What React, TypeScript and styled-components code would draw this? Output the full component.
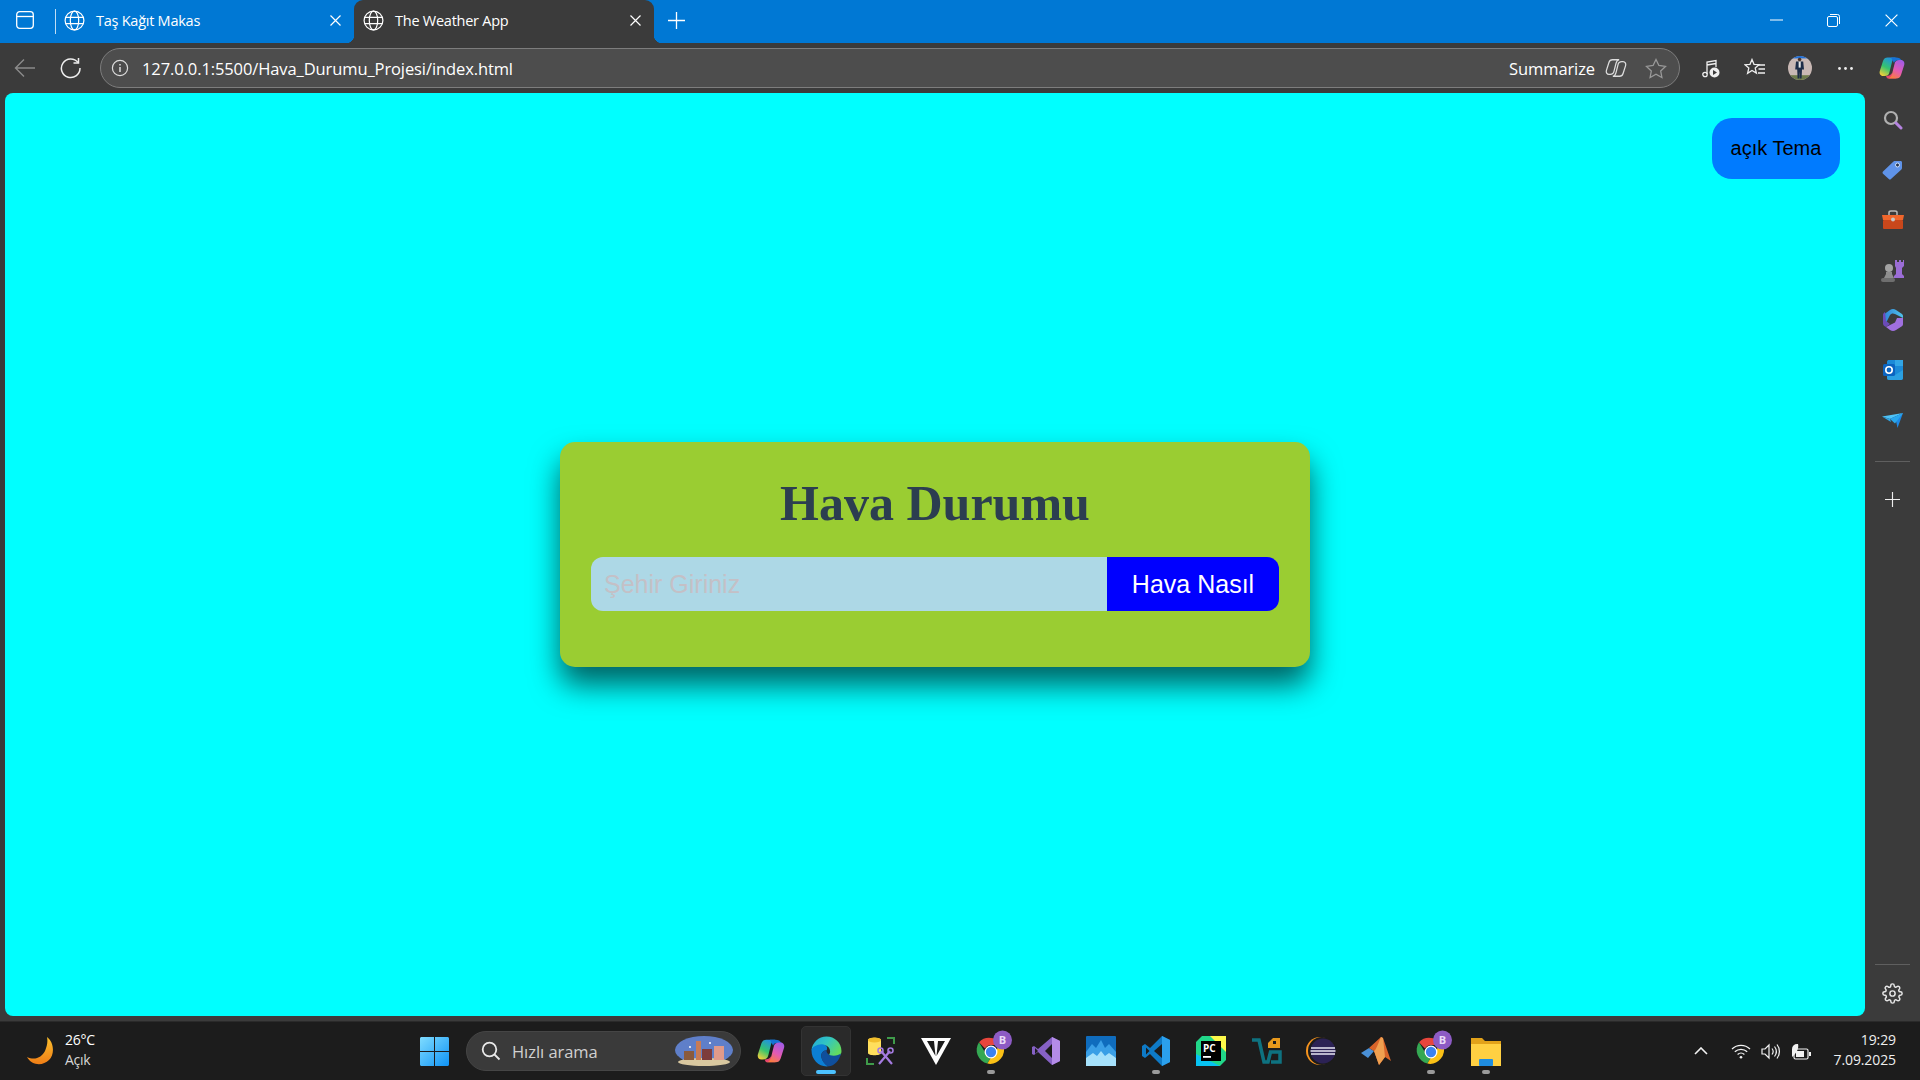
import React from 'react';
import styled, { createGlobalStyle } from 'styled-components';

const GlobalStyle = createGlobalStyle`
  html, body {
    margin: 0;
    padding: 0;
    background: #3b3b3b;
    overflow: hidden;
  }
  * {
    box-sizing: border-box;
  }
`;

const UI_FONT = `"Open Sans", "Noto Sans", "Liberation Sans", sans-serif`;
const PAGE_FONT = `"Liberation Sans", Arial, sans-serif`;

const Screen = styled.div`
  width: 1920px;
  height: 1080px;
  display: flex;
  flex-direction: column;
  font-family: ${UI_FONT};
  color: #fff;
`;

/* ---------- tab strip ---------- */

const TabStrip = styled.div`
  height: 43px;
  flex: none;
  background: #0078d4;
  display: flex;
  align-items: stretch;
`;

const TabToggle = styled.div`
  width: 55px;
  padding: 0 0 3px 16px;
  display: flex;
  align-items: center;
  position: relative;
  &::after {
    content: '';
    position: absolute;
    right: -1px;
    top: 9px;
    bottom: 9px;
    width: 1px;
    background: rgba(255, 255, 255, 0.75);
  }
`;

const Tab = styled.div<{ $active?: boolean; $width: number; $pad: number }>`
  width: ${p => p.$width}px;
  padding: 0 13px 3px ${p => p.$pad}px;
  display: flex;
  align-items: center;
  position: relative;
  background: ${p => (p.$active ? '#3b3b3b' : 'transparent')};
  border-radius: ${p => (p.$active ? '9px 9px 0 0' : '0')};
  ${p =>
    p.$active &&
    `
    &::before, &::after {
      content: '';
      position: absolute;
      bottom: 0;
      width: 8px;
      height: 8px;
    }
    &::before {
      left: -8px;
      background: radial-gradient(circle at 0 0, transparent 8px, #3b3b3b 8.5px);
    }
    &::after {
      right: -8px;
      background: radial-gradient(circle at 100% 0, transparent 8px, #3b3b3b 8.5px);
    }
  `}
`;

const TabTitle = styled.span`
  flex: 1;
  margin-left: 11px;
  font-size: 14.5px;
  letter-spacing: -0.25px;
  white-space: nowrap;
`;

const NewTab = styled.div`
  width: 44px;
  padding-bottom: 3px;
  display: flex;
  align-items: center;
  justify-content: center;
`;

const WindowControls = styled.div`
  margin-left: auto;
  display: flex;
`;

const WindowButton = styled.div`
  width: 57.6px;
  padding-bottom: 3px;
  display: flex;
  align-items: center;
  justify-content: center;
`;

/* ---------- toolbar ---------- */

const Toolbar = styled.div`
  height: 50px;
  flex: none;
  background: #3b3b3b;
  display: flex;
  align-items: center;
  padding-left: 14px;
`;

const NavButton = styled.div<{ $width: number }>`
  width: ${p => p.$width}px;
  display: flex;
  align-items: center;
  justify-content: flex-start;
`;

const AddressBar = styled.div`
  width: 1580px;
  height: 40px;
  background: #4d4d4d;
  border: 1.5px solid #7d7d7d;
  border-radius: 20px;
  display: flex;
  align-items: center;
  padding: 0 12px 0 10px;
`;

const Url = styled.span`
  margin-left: 13px;
  font-size: 16.5px;
  letter-spacing: -0.1px;
  white-space: nowrap;
`;

const SummarizeLabel = styled.span`
  margin-left: auto;
  margin-right: 10px;
  font-size: 16.5px;
  letter-spacing: -0.1px;
`;

const BarIcon = styled.div`
  margin-left: 18px;
  display: flex;
`;

const ToolbarIcons = styled.div`
  flex: 1;
  display: flex;
  align-items: center;
  padding-left: 20px;
`;

const ToolbarIcon = styled.div<{ $width: number }>`
  width: ${p => p.$width}px;
  display: flex;
  justify-content: center;
  align-items: center;
`;

/* ---------- page area ---------- */

const Middle = styled.div`
  flex: 1;
  display: flex;
  align-items: flex-start;
  min-height: 0;
  padding-left: 5px;
`;

const Viewport = styled.main`
  width: 1860px;
  height: 923px;
  background: #00ffff;
  border-radius: 8px;
  position: relative;
  display: flex;
  align-items: center;
  justify-content: center;
  font-family: ${PAGE_FONT};
`;

const ThemeButton = styled.button`
  position: absolute;
  top: 25px;
  right: 25px;
  width: 128px;
  height: 61px;
  border: none;
  border-radius: 20px;
  background: #007bff;
  color: #000;
  font-family: ${PAGE_FONT};
  font-size: 20px;
`;

const WeatherCard = styled.section`
  width: 750px;
  height: 225px;
  padding: 31px 30px 30px;
  background: #9acd32;
  border-radius: 15px;
  box-shadow: 0 18px 30px rgba(0, 0, 0, 0.62);
`;

const Title = styled.h1`
  margin: 0 0 24px;
  height: 60px;
  text-align: center;
  font-family: "Liberation Serif", "Times New Roman", serif;
  font-size: 50px;
  line-height: 60px;
  font-weight: 700;
  color: #2c3e50;
`;

const SearchRow = styled.form`
  display: flex;
  height: 54px;
  margin: 0 1px;
`;

const CityInput = styled.input`
  flex: 1;
  min-width: 0;
  border: none;
  outline: none;
  padding: 0 13px;
  font-family: ${PAGE_FONT};
  font-size: 25px;
  background: #add8e6;
  border-radius: 12px 0 0 12px;
  &::placeholder {
    color: #c4c0c6;
  }
`;

const SearchButton = styled.button`
  width: 172px;
  border: none;
  background: #0000ff;
  color: #fff;
  font-family: ${PAGE_FONT};
  font-size: 25px;
  border-radius: 0 12px 12px 0;
`;

/* ---------- edge sidebar ---------- */

const Sidebar = styled.aside`
  flex: 1;
  align-self: stretch;
  display: flex;
  flex-direction: column;
  align-items: center;
  padding: 2px 0 3px;
`;

const SideIcon = styled.div`
  width: 28px;
  height: 50px;
  flex: none;
  display: flex;
  align-items: center;
  justify-content: center;
`;

const SideDivider = styled.div<{ $above: number; $below: number }>`
  width: 35px;
  height: 1px;
  flex: none;
  background: #5f5f5f;
  margin: ${p => p.$above}px 0 ${p => p.$below}px;
`;

const SideSpacer = styled.div`
  flex: 1;
`;

/* ---------- taskbar ---------- */

const Taskbar = styled.footer`
  height: 59px;
  flex: none;
  background: #1c1c1c;
  border-top: 1px solid #2a2a2a;
  display: flex;
  align-items: center;
`;

const WeatherWidget = styled.div`
  width: 420px;
  padding-left: 27px;
  display: flex;
  align-items: center;
  gap: 11px;
`;

const WeatherText = styled.div`
  padding-bottom: 3px;
  font-size: 14px;
  line-height: 20px;
  letter-spacing: -0.25px;
`;

const WeatherSub = styled.div`
  color: #d6d6d6;
`;

const StartButton = styled.div`
  width: 46px;
  display: flex;
`;

const QuickSearch = styled.div`
  width: 275px;
  height: 40px;
  border-radius: 20px;
  background: #3a3a3a;
  border: 1px solid #454545;
  display: flex;
  align-items: center;
  padding: 0 6px 0 14px;
`;

const QuickSearchText = styled.span`
  flex: 1;
  margin-left: 11px;
  font-size: 16.5px;
  letter-spacing: -0.05px;
  color: #d0d0d0;
`;

const AppIcons = styled.div`
  display: flex;
  margin-left: 2.5px;
`;

const AppSlot = styled.div<{ $active?: boolean; $running?: boolean }>`
  width: 55px;
  height: 50px;
  display: flex;
  align-items: center;
  justify-content: center;
  position: relative;
  &::before {
    content: '';
    display: ${p => (p.$active ? 'block' : 'none')};
    position: absolute;
    left: 2.5px;
    right: 2.5px;
    top: 0;
    bottom: 0;
    background: #2a2a2a;
    border: 1px solid #333;
    border-radius: 5px;
  }
  &::after {
    content: '';
    display: ${p => (p.$active || p.$running ? 'block' : 'none')};
    position: absolute;
    bottom: 2px;
    left: 50%;
    width: ${p => (p.$active ? '20px' : '8px')};
    height: 4px;
    transform: translateX(-50%);
    border-radius: 2px;
    background: ${p => (p.$active ? '#4cc2ff' : '#9a9a9a')};
  }
  & > svg {
    position: relative;
    overflow: visible;
  }
`;

const Tray = styled.div`
  margin-left: auto;
  display: flex;
  align-items: center;
  padding-right: 24px;
`;

const TrayIcon = styled.div<{ $width: number; $gap?: number }>`
  width: ${p => p.$width}px;
  margin-right: ${p => p.$gap || 0}px;
  display: flex;
  justify-content: center;
`;

const Clock = styled.div`
  margin-left: 18px;
  padding-bottom: 2px;
  text-align: right;
  font-size: 14px;
  line-height: 20px;
  color: #eee;
  letter-spacing: -0.1px;
`;

/* ---------- drawings ---------- */

const COPILOT_LEFT = 'M9.5 3.5H18C15.500 4 14.500 6 14 8L11.500 18C11 21 9 22 6.500 22H5C2.500 22 1 19.500 1.800 17L5 7C5.800 4.500 7.500 3.500 9.500 3.500z';
const COPILOT_RIGHT = 'M18.500 24.500H10C12.500 24 13.500 22 14 20L16.500 10C17 7 19 6 21.500 6H23C25.500 6 27 8.500 26.200 11L23 21C22.200 23.500 20.500 24.500 18.500 24.500z';

const Globe = () => (
  <svg width="21" height="21" viewBox="0 0 21 21" fill="none" stroke="#fff" strokeWidth="1.2">
    <circle cx="10.5" cy="10.5" r="9.4" />
    <ellipse cx="10.5" cy="10.5" rx="4.2" ry="9.4" />
    <path d="M1.6 7.3h17.800M1.6 13.7h17.800" />
  </svg>
);

const CloseX = ({ size = 11 }: { size?: number }) => (
  <svg width={size} height={size} viewBox="0 0 11 11" stroke="#fff" strokeWidth={size > 11 ? 1 : 1.2}>
    <path d="M.5.5l10 10M10.500.5l-10 10" />
  </svg>
);

const Plus = ({ size = 17, color = '#fff' }: { size?: number; color?: string }) => (
  <svg width={size} height={size} viewBox="0 0 17 17" stroke={color} strokeWidth="1.3">
    <path d="M8.500 0v17M0 8.500h17" />
  </svg>
);

const CopilotOutline = () => (
  <svg width="22" height="22" viewBox="0 0 28 28" fill="none" stroke="#ddd" strokeWidth="1.600">
    <path d={COPILOT_LEFT} />
    <path d={COPILOT_RIGHT} />
  </svg>
);

const CopilotLogo = ({ size, idPrefix }: { size: number; idPrefix: string }) => (
  <svg width={size} height={size} viewBox="0 0 28 28">
    <defs>
      <linearGradient id={`${idPrefix}A`} x1=".7" y1="0" x2=".2" y2="1">
        <stop offset="0" stopColor="#1f8fe8" />
        <stop offset=".55" stopColor="#35c46e" />
        <stop offset="1" stopColor="#f4cf3a" />
      </linearGradient>
      <linearGradient id={`${idPrefix}B`} x1=".8" y1="0" x2=".3" y2="1">
        <stop offset="0" stopColor="#9f5ce8" />
        <stop offset=".55" stopColor="#e45ab4" />
        <stop offset="1" stopColor="#fb7d3c" />
      </linearGradient>
    </defs>
    <path d="M8 22c3 0 5-1 6-3l4 5.500h-8c-1 0-1.500-1.500-2-2.500z" fill="#e8456e" />
    <path d={COPILOT_LEFT} fill={`url(#${idPrefix}A)`} />
    <path d="M13 3.500h5c3 0 4.500 1 5.500 3H19c-1.500 0-2.500 1-3 2.500z" fill="#1672d6" />
    <path d={COPILOT_RIGHT} fill={`url(#${idPrefix}B)`} />
  </svg>
);

const EdgeLogo = () => (
  <svg width="31" height="31" viewBox="0 0 30 30">
    <defs>
      <linearGradient id="edgeA" x1="0" y1="0" x2="1" y2=".6">
        <stop offset="0" stopColor="#1fa5dc" />
        <stop offset=".5" stopColor="#33c6c0" />
        <stop offset="1" stopColor="#64dc5c" />
      </linearGradient>
    </defs>
    <path d="M15 .5C23 .5 29.500 6.500 29.500 14.500c0 5-4 6.500-7 6.500-3 0-5-1-5-2.500 0-1 1-1.500 1-3.500 0-3-2-6-6-6C6.500 9 1 12 .5 14 1 6.500 7.500.5 15 .5z" fill="url(#edgeA)" />
    <path d="M.5 14c0-3 5-6 10-6 5 0 6 4 4.500 6-3 0-5 2-5 5 0 4 3 8 7 10.300C8 30.500.5 23 .5 14z" fill="#0c7fd4" />
    <path d="M10 19c0-3 2-5 5-5 0 2.500 2 5 7 5 3 0 5.500-1 7-2-1.500 7-7 12.500-12 12.300C13 28 10 23 10 19z" fill="#0f4f9c" />
  </svg>
);

const ChromeLogo = () => (
  <svg width="32" height="38" viewBox="0 0 32 38">
    <path d="M16 6a14 14 0 0 1 12.100 7H16a7 7 0 0 0-6 3.500L4 10.200A14 14 0 0 1 16 6z" fill="#e8453c" />
    <path d="M4 10.200l6.100 10.300a7 7 0 0 0 6.600 3.400l-4.300 7.700A14 14 0 0 1 4 10.200z" fill="#34a853" />
    <path d="M28.100 13a14 14 0 0 1-15.700 18.600l6.100-10.300A7 7 0 0 0 21.900 13z" fill="#fbc116" />
    <circle cx="16" cy="20" r="5.800" fill="#3b82f0" stroke="#fff" strokeWidth="1.300" />
    <circle cx="27.500" cy="8" r="9.500" fill="#8d5bc4" />
    <text x="27.500" y="12" fontSize="11" fontWeight="700" textAnchor="middle" fill="#e9dcf7" fontFamily="Open Sans, sans-serif">B</text>
  </svg>
);

const Tile = ({ children }: { children: React.ReactNode }) => (
  <svg width="30" height="30" viewBox="0 0 30 30">
    {children}
  </svg>
);

const App: React.FC = () => {
  return (
    <Screen>
      <GlobalStyle />
      <TabStrip>
        <TabToggle>
          <svg width="18" height="18" viewBox="0 0 18 18" fill="none" stroke="#fff" strokeWidth="1.3">
            <rect x=".7" y=".7" width="16.600" height="16.600" rx="3" />
            <path d="M.7 5.500h16.600" />
          </svg>
        </TabToggle>
        <Tab $width={299} $pad={9}>
          <Globe />
          <TabTitle>Taş Kağıt Makas</TabTitle>
          <CloseX />
        </Tab>
        <Tab $width={300} $active $pad={9}>
          <Globe />
          <TabTitle>The Weather App</TabTitle>
          <CloseX />
        </Tab>
        <NewTab>
          <Plus />
        </NewTab>
        <WindowControls>
          <WindowButton>
            <svg width="13" height="2" viewBox="0 0 13 2" stroke="#fff"><path d="M0 1h13" /></svg>
          </WindowButton>
          <WindowButton>
            <svg width="13" height="13" viewBox="0 0 13 13" fill="none" stroke="#fff">
              <rect x=".5" y="2.500" width="10" height="10" rx="1.500" />
              <path d="M3 .5h7.500a2 2 0 0 1 2 2V10" />
            </svg>
          </WindowButton>
          <WindowButton>
            <CloseX size={13} />
          </WindowButton>
        </WindowControls>
      </TabStrip>

      <Toolbar>
        <NavButton $width={46}>
          <svg width="22" height="20" viewBox="0 0 22 20" fill="none" stroke="#8b8b8b" strokeWidth="1.400">
            <path d="M21 10H1.500M10 1.500L1.500 10l8.500 8.500" />
          </svg>
        </NavButton>
        <NavButton $width={40}>
          <svg width="21" height="22" viewBox="0 0 21 22" fill="none" stroke="#eee" strokeWidth="1.500">
            <path d="M18 5.500A9.300 9.300 0 1 0 20 11" />
            <path d="M18.500 1v5h-5" />
          </svg>
        </NavButton>
        <AddressBar>
          <svg width="18" height="18" viewBox="0 0 18 18" fill="none" stroke="#ddd" strokeWidth="1.200">
            <circle cx="9" cy="9" r="7.600" />
            <path d="M9 8v5M9 5v1.400" strokeWidth="1.500" />
          </svg>
          <Url>127.0.0.1:5500/Hava_Durumu_Projesi/index.html</Url>
          <SummarizeLabel>Summarize</SummarizeLabel>
          <CopilotOutline />
          <BarIcon>
            <svg width="22" height="21" viewBox="0 0 22 21" fill="none" stroke="#999" strokeWidth="1.300">
              <path d="M11 1.500l2.900 6 6.600.9-4.800 4.600 1.200 6.500-5.900-3.200-5.900 3.200 1.200-6.500L1.500 8.400l6.600-.9z" />
            </svg>
          </BarIcon>
        </AddressBar>
        <ToolbarIcons>
          <ToolbarIcon $width={22}>
            <svg width="18" height="20" viewBox="0 0 18 20" fill="none" stroke="#eee" strokeWidth="1.300">
              <circle cx="3" cy="16.500" r="2.200" />
              <path d="M5 16V4l9-1.500V9M5 7l9-1.500" />
              <circle cx="12.500" cy="14.500" r="5" fill="#eee" stroke="none" />
              <path d="M11 12v5l4-2.500z" fill="#3b3b3b" stroke="none" />
            </svg>
          </ToolbarIcon>
          <ToolbarIcon $width={66}>
            <svg width="22" height="20" viewBox="0 0 22 20" fill="none" stroke="#eee" strokeWidth="1.300">
              <path d="M8 1.500l2 4.800 5 .4-3.800 3.400 1.200 5-4.400-2.700-4.400 3 1.200-5.300L1 6.700l5-.4z" />
              <path d="M14 7h7M14.500 11H21M14 15h7" />
            </svg>
          </ToolbarIcon>
          <ToolbarIcon $width={24}>
            <svg width="30" height="30" viewBox="0 0 30 30">
              <defs>
                <clipPath id="avatarClip"><circle cx="15" cy="15" r="15" /></clipPath>
              </defs>
              <g clipPath="url(#avatarClip)">
                <rect width="30" height="30" fill="#c9b8b4" />
                <rect width="30" height="3" fill="#1f6fd6" />
                <rect y="24" width="30" height="6" fill="#6d7a4a" />
                <circle cx="14.500" cy="4.500" r="2.200" fill="#4a3328" />
                <path d="M10 7h9l1 10h-2.500l-.5 11h-2.200l-.3-9-.3 9H12l-.5-11H9z" fill="#1d2c47" />
                <rect x="13.300" y="7" width="2.600" height="7.500" fill="#e8e8e8" />
              </g>
            </svg>
          </ToolbarIcon>
          <ToolbarIcon $width={66}>
            <svg width="15" height="3" viewBox="0 0 15 3" fill="#eee">
              <circle cx="1.500" cy="1.500" r="1.400" /><circle cx="7.500" cy="1.500" r="1.400" /><circle cx="13.500" cy="1.500" r="1.400" />
            </svg>
          </ToolbarIcon>
          <ToolbarIcon $width={28}>
            <CopilotLogo size={30} idPrefix="copTop" />
          </ToolbarIcon>
        </ToolbarIcons>
      </Toolbar>

      <Middle>
        <Viewport>
          <ThemeButton>açık Tema</ThemeButton>
          <WeatherCard>
            <Title>Hava Durumu</Title>
            <SearchRow>
              <CityInput placeholder="Şehir Giriniz" />
              <SearchButton type="button">Hava Nasıl</SearchButton>
            </SearchRow>
          </WeatherCard>
        </Viewport>
        <Sidebar>
          <SideIcon>
            <svg width="20" height="20" viewBox="0 0 20 20" fill="none">
              <circle cx="8" cy="8" r="6" stroke="#b0b0b0" strokeWidth="2.200" />
              <path d="M13 13l5 5" stroke="#b583e0" strokeWidth="3" strokeLinecap="round" />
            </svg>
          </SideIcon>
          <SideIcon>
            <svg width="21" height="20" viewBox="0 0 21 20">
              <path d="M1 11.500L11.500 1.500c.5-.4 1-.5 1.500-.5h5.500C19.500 1 20 1.600 20 2.500V8c0 .6-.2 1-.6 1.400L9 19c-.7.7-1.500.7-2.200 0L1 13.700c-.6-.7-.6-1.500 0-2.200z" fill="#5f93e8" />
              <circle cx="15.500" cy="5" r="2" fill="#27364f" stroke="#cfe0f9" />
            </svg>
          </SideIcon>
          <SideIcon>
            <svg width="22" height="20" viewBox="0 0 22 20">
              <path d="M7 5V2.500C7 1.500 8 1 9 1h4c1 0 2 .5 2 1.500V5" fill="none" stroke="#b8b8b8" strokeWidth="1.500" />
              <path d="M0 5h22l-1 5H1z" fill="#f0662c" />
              <rect x="1" y="10" width="20" height="9" rx="1" fill="#c9471b" />
              <circle cx="11" cy="9.500" r="2" fill="#c6c6c6" />
            </svg>
          </SideIcon>
          <SideIcon>
            <svg width="24" height="24" viewBox="0 0 24 24">
              <path d="M14 2h2v2h2V2h2v2h2V2h1v6l-2 2v6l2 2v2H13v-2l2-2v-6l-1-2z" fill="#9b6dd6" />
              <circle cx="8" cy="10" r="4" fill="#a3a3a3" />
              <path d="M5 14h6v2l2 4H3l2-4z" fill="#8e8e8e" />
              <rect x="0" y="20" width="14" height="4" rx="2" fill="#6e6e6e" />
            </svg>
          </SideIcon>
          <SideIcon>
            <svg width="20" height="22" viewBox="0 0 20 22">
              <defs>
                <linearGradient id="m365A" x1="0" y1="0" x2="1" y2="0">
                  <stop offset="0" stopColor="#2f80d8" />
                  <stop offset="1" stopColor="#4fc3ea" />
                </linearGradient>
              </defs>
              <path d="M0 6l7-5c2-1.300 4-1.300 6 0l6 4c.7.5 1 1.200 1 2v2l-8-4c-2-1-4-.5-5 1L3 14l-3-2z" fill="url(#m365A)" />
              <path d="M0 6c0-1 .5-2 2-3l1 9 4 3-4 3c-2-1-3-2-3-3.500z" fill="#6b4ab8" />
              <path d="M20 9v6c0 1-.5 2-1.500 2.500L13 21c-2 1.300-4 1.300-6 0l-4-3 9-4.500 2-4.500z" fill="#a070e0" />
            </svg>
          </SideIcon>
          <SideIcon>
            <svg width="20" height="20" viewBox="0 0 20 20">
              <path d="M6 0h12c1 0 2 .6 2 1.500V18c0 1-1 2-2 2H6c-1 0-2-1-2-2V1.500C4 .6 5 0 6 0z" fill="#1a8ad8" />
              <path d="M12 0h8v6h-8z" fill="#32a6e6" />
              <path d="M4 12l8 3 8-5v8c0 1-1 2-2 2H6c-1 0-2-1-2-2z" fill="#2ba0e2" />
              <rect x="0" y="4" width="12" height="12" rx="1.500" fill="#0b64c0" />
              <circle cx="6" cy="10" r="3.200" fill="none" stroke="#fff" strokeWidth="1.600" />
            </svg>
          </SideIcon>
          <SideIcon>
            <svg width="21" height="15" viewBox="0 0 21 15">
              <path d="M0 3.500L21 0 8 6z" fill="#4fc3f7" />
              <path d="M21 0l-13 6 6 2 1.500 7z" fill="#1e88e5" />
              <path d="M21 0L8 6l5 4.500z" fill="#29a6ec" />
              <path d="M0 3.500L8 6l1 3z" fill="#2fa8e8" />
            </svg>
          </SideIcon>
          <SideDivider $above={16} $below={12} />
          <SideIcon>
            <Plus size={15} color="#eee" />
          </SideIcon>
          <SideSpacer />
          <SideDivider $above={0} $below={3} />
          <SideIcon>
            <svg width="21" height="21" viewBox="0 0 24 24" fill="none" stroke="#e6e6e6" strokeWidth="1.700" strokeLinejoin="round">
              <circle cx="12" cy="12" r="3" />
              <path d="M19.400 15a1.650 1.650 0 0 0 .33 1.820l.06.06a2 2 0 1 1-2.830 2.830l-.06-.06a1.650 1.650 0 0 0-2.820 1.170V21a2 2 0 1 1-4 0v-.09a1.650 1.650 0 0 0-2.820-1.170l-.06.06a2 2 0 1 1-2.830-2.830l.06-.06A1.650 1.650 0 0 0 3.090 14H3a2 2 0 1 1 0-4h.09a1.650 1.650 0 0 0 1.170-2.820l-.06-.06a2 2 0 1 1 2.830-2.830l.06.06A1.650 1.650 0 0 0 10 3.090V3a2 2 0 1 1 4 0v.09a1.650 1.650 0 0 0 2.820 1.170l.06-.06a2 2 0 1 1 2.830 2.830l-.06.06A1.650 1.650 0 0 0 20.910 10H21a2 2 0 1 1 0 4h-.09a1.650 1.650 0 0 0-1.510 1z" />
            </svg>
          </SideIcon>
        </Sidebar>
      </Middle>

      <Taskbar>
        <WeatherWidget>
          <svg width="27" height="28" viewBox="0 0 27 28">
            <defs>
              <linearGradient id="moonFill" x1="0" y1="0" x2="0" y2="1">
                <stop offset="0" stopColor="#fbc02d" />
                <stop offset="1" stopColor="#ef7d16" />
              </linearGradient>
            </defs>
            <path d="M20 0C27 5 28 17 22 23 16 29 5 29 0 20 8 24 15 20 18 14 20 9 21 5 20 0z" fill="url(#moonFill)" />
          </svg>
          <WeatherText>
            <div>26°C</div>
            <WeatherSub>Açık</WeatherSub>
          </WeatherText>
        </WeatherWidget>
        <StartButton>
          <svg width="29" height="29" viewBox="0 0 29 29">
            <defs>
              <linearGradient id="winFill" x1="0" y1="0" x2="1" y2="1">
                <stop offset="0" stopColor="#7fdcff" />
                <stop offset="1" stopColor="#0f93f5" />
              </linearGradient>
            </defs>
            <path d="M0 1.500C0 .7.700 0 1.500 0H14v14H0zM15 0h12.500c.8 0 1.500.7 1.500 1.500V14H15zM0 15h14v14H1.500C.7 29 0 28.300 0 27.500zM15 15h14v12.500c0 .8-.7 1.500-1.500 1.500H15z" fill="url(#winFill)" />
          </svg>
        </StartButton>
        <QuickSearch>
          <svg width="20" height="20" viewBox="0 0 20 20" fill="none" stroke="#e8e8e8" strokeWidth="1.800">
            <circle cx="8.500" cy="8.500" r="6.800" />
            <path d="M13.500 13.500L18.500 18.500" />
          </svg>
          <QuickSearchText>Hızlı arama</QuickSearchText>
          <svg width="60" height="32" viewBox="0 0 60 32">
            <ellipse cx="30" cy="15" rx="29" ry="14" fill="#5f7fc9" />
            <ellipse cx="30" cy="27" rx="26" ry="4" fill="#d9c8a0" />
            <rect x="10" y="16" width="10" height="9" fill="#8a5a3c" />
            <rect x="22" y="6" width="5" height="19" fill="#c87b55" />
            <rect x="28" y="14" width="10" height="11" fill="#7d3c3c" />
            <rect x="40" y="11" width="10" height="14" fill="#e09a8a" />
            <circle cx="16" cy="12" r="1" fill="#fff" />
            <circle cx="36" cy="8" r="1" fill="#fff" />
          </svg>
        </QuickSearch>
        <AppIcons>
          <AppSlot><CopilotLogo size={30} idPrefix="copBar" /></AppSlot>
          <AppSlot $active><EdgeLogo /></AppSlot>
          <AppSlot>
            <Tile>
              <path d="M2 4c0-3 13-3 13 0v13c0 3-13 3-13 0z" fill="#ffdf5c" />
              <ellipse cx="8.500" cy="4" rx="6.500" ry="2.500" fill="#f2bf2c" />
              <path d="M21 2h7v6M1 22v6h7" fill="none" stroke="#3f9b4a" strokeWidth="2" />
              <path d="M13 28L24 15M26 28L15 15" stroke="#a57be0" strokeWidth="2.200" />
              <circle cx="14.500" cy="14.500" r="2.500" fill="none" stroke="#a57be0" strokeWidth="1.600" />
              <circle cx="24.500" cy="14.500" r="2.500" fill="none" stroke="#a57be0" strokeWidth="1.600" />
            </Tile>
          </AppSlot>
          <AppSlot>
            <Tile>
              <path d="M0 2h30L15 29z" fill="#fff" />
              <path d="M6 5h7l1.500 15zM24 5h-7l-1.500 15z" fill="#1c1c1c" />
            </Tile>
          </AppSlot>
          <AppSlot $running><ChromeLogo /></AppSlot>
          <AppSlot>
            <Tile>
              <path d="M21 1l8 4v20l-8 4L7 16l-4 3-2-1V11l2-1 4 3z" fill="#8661c5" />
              <path d="M21 1l8 4v20l-8 4z" fill="#b48ce8" />
              <path d="M21 8l-7 7 7 7z" fill="#1c1c1c" />
              <path d="M4 12v6l3-3z" fill="#1c1c1c" />
            </Tile>
          </AppSlot>
          <AppSlot>
            <Tile>
              <rect y="0" width="30" height="30" rx="1" fill="#0f6cbd" />
              <path d="M0 16l6-8 4 4 5-8 4 8 4-4 7 8v14H0z" fill="#3a9fe6" />
              <path d="M0 22l7-5 4 3 4-5 4 5 4-3 7 5v8H0z" fill="#a6e1fb" />
            </Tile>
          </AppSlot>
          <AppSlot $running>
            <Tile>
              <path d="M21 0l8 4v22l-8 4L9 18l-5 4-3-2V10l3-2 5 4z" fill="#0e7ac6" />
              <path d="M21 0l8 4v22l-8 4z" fill="#2ba0ec" />
              <path d="M21 8l-8 7 8 7z" fill="#1c1c1c" />
              <path d="M5 11.500v7l3.500-3.500z" fill="#1c1c1c" />
            </Tile>
          </AppSlot>
          <AppSlot>
            <Tile>
              <path d="M6 0h24v24l-6 6H0V6z" fill="#21d789" />
              <path d="M14 0h16v16z" fill="#fcf84a" />
              <path d="M0 18v12h24z" fill="#07c3f2" />
              <rect x="5" y="5" width="20" height="20" fill="#000" />
              <text x="7" y="15.500" fontSize="10" fontWeight="700" fill="#fff" fontFamily="Open Sans, sans-serif">PC</text>
              <rect x="7" y="20" width="8" height="1.800" fill="#fff" />
            </Tile>
          </AppSlot>
          <AppSlot>
            <Tile>
              <path d="M1 4h7l5 22h4l2.500-10H29v10h-9" fill="none" stroke="#0e7280" strokeWidth="3.500" />
              <path d="M17 12V7l5-5h7v10z" fill="#e8991c" />
              <rect x="22" y="5" width="3" height="3" fill="#1c1c1c" />
            </Tile>
          </AppSlot>
          <AppSlot>
            <Tile>
              <circle cx="14" cy="15" r="14" fill="#f7941e" />
              <circle cx="16" cy="15" r="14" fill="#1c1c1c" />
              <circle cx="17" cy="15" r="12.500" fill="#2c2255" />
              <path d="M5 12h24M4.500 15h25M5 18h24" stroke="#e8e6f2" strokeWidth="1.600" />
            </Tile>
          </AppSlot>
          <AppSlot>
            <Tile>
              <path d="M0 17l8-5 5 3-6 7z" fill="#4a90d6" />
              <path d="M8 12L20 1l2 1 8 23-6-4-6 8-5-14z" fill="#d8642a" />
              <path d="M20 1c-3 7-5 13-7 14l5 14 6-8-2-19z" fill="#f0a050" />
            </Tile>
          </AppSlot>
          <AppSlot $running><ChromeLogo /></AppSlot>
          <AppSlot $running>
            <Tile>
              <path d="M0 2h11l3 3h16v24H0z" fill="#e2a21a" />
              <rect x="0" y="8" width="30" height="22" fill="#ffd042" />
              <rect x="8" y="23" width="14" height="7" rx="1" fill="#1f8de0" />
            </Tile>
          </AppSlot>
        </AppIcons>
        <Tray>
          <TrayIcon $width={30} $gap={10}>
            <svg width="14" height="8" viewBox="0 0 14 8" fill="none" stroke="#f2f2f2" strokeWidth="1.600">
              <path d="M1 7l6-6 6 6" />
            </svg>
          </TrayIcon>
          <TrayIcon $width={30}>
            <svg width="20" height="15" viewBox="0 0 20 15" fill="none" stroke="#f2f2f2" strokeWidth="1.300">
              <path d="M1 5a13 13 0 0 1 18 0M3.800 7.800a9 9 0 0 1 12.400 0M6.600 10.500a5 5 0 0 1 6.800 0" />
              <circle cx="10" cy="13.300" r="1.300" fill="#f2f2f2" stroke="none" />
            </svg>
          </TrayIcon>
          <TrayIcon $width={30}>
            <svg width="20" height="17" viewBox="0 0 20 17" fill="none" stroke="#f2f2f2" strokeWidth="1.200">
              <path d="M1 6h3l4-4v13l-4-4H1z" />
              <path d="M11 5.500c1.400 1.800 1.400 4.200 0 6M13.500 3.500c2.300 3 2.300 7 0 10M16 1.500c3.200 4.200 3.200 9.800 0 14" />
            </svg>
          </TrayIcon>
          <TrayIcon $width={30}>
            <svg width="20" height="17" viewBox="0 0 20 17" fill="none" stroke="#f2f2f2" strokeWidth="1.200">
              <path d="M1 14V6a5 5 0 0 1 5-5h1c1 4-1 9-6 13z" fill="#f2f2f2" stroke="none" />
              <rect x="3" y="6" width="14" height="10" rx="1.500" />
              <rect x="5" y="8" width="8" height="6" fill="#f2f2f2" stroke="none" />
              <rect x="18" y="9" width="2" height="4" fill="#f2f2f2" stroke="none" />
            </svg>
          </TrayIcon>
          <Clock>
            <div>19:29</div>
            <div>7.09.2025</div>
          </Clock>
        </Tray>
      </Taskbar>
    </Screen>
  );
};

export default App;
